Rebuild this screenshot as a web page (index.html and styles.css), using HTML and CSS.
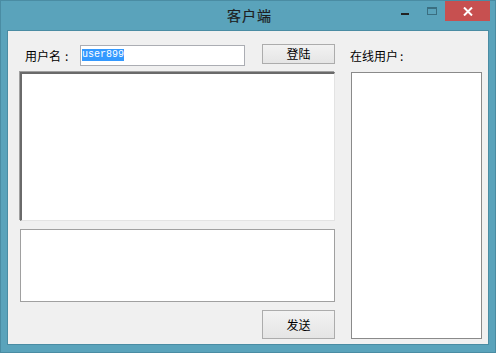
FILE: index.html
```html
<!DOCTYPE html>
<html>
<head>
<meta charset="utf-8">
<link rel="stylesheet" href="styles.css">
</head>
<body>
<div class="window">
  <div class="titlebar">
    <div class="title">客户端</div>
    <div class="controls">
      <div class="btn-min"><span class="min-bar"></span></div>
      <div class="btn-max"><span class="max-box"></span></div>
      <div class="btn-close">
        <svg width="10" height="9" viewBox="0 0 10 9"><path d="M1 0.5 L9 8.5 M9 0.5 L1 8.5" stroke="#fff" stroke-width="2" fill="none"/></svg>
      </div>
    </div>
  </div>
  <div class="client">
    <div class="left">
      <div class="login-row">
        <span class="label">用户名<span class="colon">:</span></span>
        <div class="textbox"><span class="sel">user899</span></div>
        <div class="button login">登陆</div>
      </div>
      <div class="chat"></div>
      <div class="input"></div>
      <div class="send-row"><div class="button send">发送</div></div>
    </div>
    <div class="right">
      <div class="online-label">在线用户<span class="colon2">:</span></div>
      <div class="list"></div>
    </div>
  </div>
</div>
</body>
</html>
```

FILE: styles.css
```css
* { box-sizing: border-box; }
html, body { margin: 0; padding: 0; }
body { width: 496px; height: 353px; overflow: hidden; font-family: "Noto Sans CJK SC", "Liberation Sans", sans-serif; }
.window {
  width: 496px; height: 353px;
  background: #5aa3bb;
  border: 1px solid #4a8ca3;
  display: flex; flex-direction: column;
}
.titlebar {
  height: 29px; position: relative;
  display: flex; justify-content: center;
}
.title {
  font-size: 14px; line-height: 28px; color: #1e1e1e; letter-spacing: 1px;
  padding-left: 3px; -webkit-text-stroke: 0.2px #1e1e1e;
}
.controls { position: absolute; right: 5px; top: 0; display: flex; height: 20px; }
.btn-min { width: 26px; height: 20px; position: relative; }
.min-bar { position: absolute; left: 0; top: 12px; width: 8px; height: 2px; background: #222; }
.btn-max { width: 18px; height: 20px; position: relative; }
.max-box { position: absolute; left: 0; top: 6px; width: 10px; height: 8px; border: 1px solid #3a6e80; border-top-width: 2px; }
.btn-close {
  width: 45px; height: 20px; background: #c75050;
  display: flex; align-items: center; justify-content: center;
}
.client {
  flex: 1; margin: 0 6px 7px 6px;
  background: #f0f0f0; border: 1px solid #4a8ca3;
  display: flex; gap: 16px; padding: 13px 0 0 12px;
}
.left { width: 315px; display: flex; flex-direction: column; }
.login-row { height: 22px; display: flex; align-items: flex-start; }
.label { font-size: 12px; line-height: 14px; color: #000; margin: 5px 0 0 5px; width: 55px; white-space: nowrap; }
.colon { margin-left: 4px; }
.colon2 { margin-left: 2px; }
.textbox {
  width: 165px; height: 21px; margin-top: 1px;
  background: #fff; border: 1px solid #abadb3;
  padding: 3px 0 0 1px;
  display: flex; align-items: flex-start;
}
.sel { font-family: "Liberation Mono", monospace; font-size: 10px; line-height: 12px; height: 12px; background: #3399ff; color: #fff; display: block; }
.button {
  width: 73px; border: 1px solid #acacac;
  background: linear-gradient(#f2f2f2, #e5e5e5);
  font-size: 12px; color: #000; text-align: center;
}
.login { height: 20px; line-height: 18px; margin-left: 17px; }
.chat {
  height: 149px; margin-top: 6px; background: #fff;
  border-top: 2px solid #6a6a6a; border-left: 2px solid #6a6a6a;
  border-right: 1px solid #e3e3e3; border-bottom: 1px solid #e3e3e3;
  box-shadow: -1px -1px 0 #a0a0a0;
}
.input { height: 73px; margin-top: 8px; background: #fff; border: 1px solid #a0a0a0; }
.send-row { display: flex; justify-content: flex-end; margin-top: 8px; }
.send { height: 29px; line-height: 27px; }
.right { width: 131px; display: flex; flex-direction: column; }
.online-label { font-size: 12px; line-height: 14px; color: #000; margin: 5px 0 0 -1px; height: 23px; white-space: nowrap; }
.list { height: 267px; background: #fff; border: 1px solid #8a8a8a; }
```
